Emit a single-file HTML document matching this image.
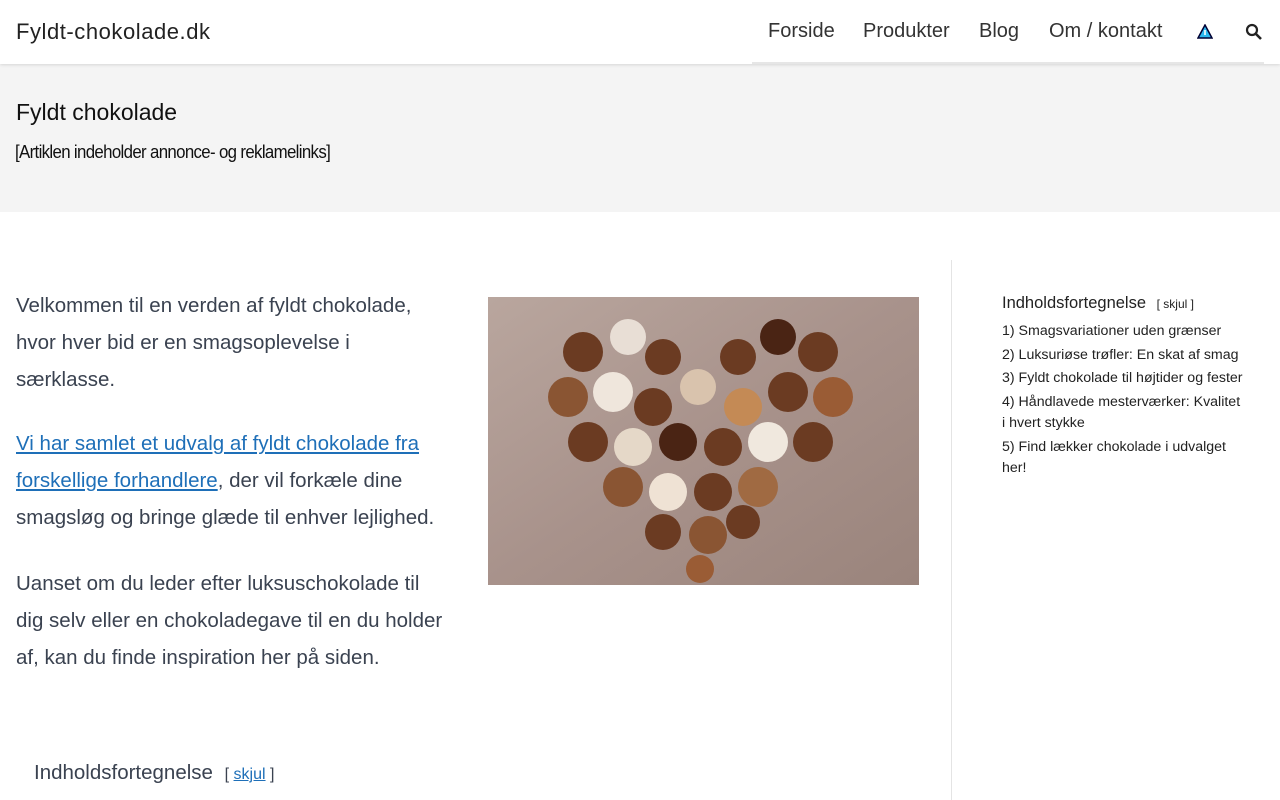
<!DOCTYPE html>
<html><head><meta charset="utf-8"><style>
*{margin:0;padding:0;box-sizing:border-box}
body{width:1280px;height:800px;overflow:hidden;background:#fff;font-family:"Liberation Sans",sans-serif;color:#3a4250}
.hdr{height:64px;position:relative;background:#fff;box-shadow:0 1px 3px rgba(0,0,0,.12);z-index:2}
.logo{position:absolute;left:16px;top:19px;font-size:22px;color:#222;letter-spacing:0.55px}
.nav{position:absolute;left:752px;right:16px;top:0;height:64px;border-bottom:2px solid #e6e6e6}
.nav span{position:absolute;top:20px;font-size:20px;color:#333;letter-spacing:0}
.band{background:#f4f4f4;height:148px;position:relative}
.band h1{position:absolute;left:16px;top:35px;font-size:23px;font-weight:normal;color:#111}
.band p{position:absolute;left:15px;top:78px;font-size:18px;color:#111;letter-spacing:-0.7px;transform:scaleX(.935);transform-origin:left}
.txt{position:absolute;left:16px;width:432px;font-size:20.5px;line-height:37px;color:#3a4250;letter-spacing:0}
a{color:#1e6fb8;text-decoration:underline}
.vline{position:absolute;left:951px;top:260px;width:1px;height:540px;background:#e4e4e4}
.toc{position:absolute;left:1002px;top:294px;width:243px;font-size:14.2px;color:#222}
.toc .t{font-size:16.5px;margin-bottom:8px}
.toc .t small{font-size:12px;margin-left:6px}
.toc div.i{line-height:21.5px;margin-bottom:2px}
</style></head><body>
<div class="hdr"><div class="logo">Fyldt-chokolade.dk</div>
<div class="nav"><span style="left:16px">Forside</span><span style="left:111px">Produkter</span><span style="left:227px">Blog</span><span style="left:297px">Om / kontakt</span>
<svg style="position:absolute;left:445px;top:24px" width="16" height="15" viewBox="0 0 16 15"><path d="M8 1L15 14H1Z" fill="#2bb8f0" stroke="#003" stroke-width="1.5"/><rect x="7.2" y="6" width="1.6" height="5" fill="#fff"/></svg>
<svg style="position:absolute;left:493px;top:23px" width="18" height="18" viewBox="0 0 18 18"><circle cx="7" cy="7" r="5" fill="none" stroke="#222" stroke-width="2.2"/><path d="M10.5 10.5L16 16" stroke="#222" stroke-width="2.6"/></svg>
</div></div>
<div class="band"><h1>Fyldt chokolade</h1><p>[Artiklen indeholder annonce- og reklamelinks]</p></div>
<div class="txt" style="top:287px;width:415px">Velkommen til en verden af fyldt chokolade, hvor hver bid er en smagsoplevelse i særklasse.</div>
<div class="txt" style="top:425px;width:430px"><a>Vi har samlet et udvalg af fyldt chokolade fra forskellige forhandlere</a>, der vil forkæle dine smagsløg og bringe glæde til enhver lejlighed.</div>
<div class="txt" style="top:565px;width:430px">Uanset om du leder efter luksuschokolade til dig selv eller en chokoladegave til en du holder af, kan du finde inspiration her på siden.</div>
<svg style="position:absolute;left:488px;top:297px" width="431" height="288" viewBox="0 0 431 288">
<defs><linearGradient id="w" x1="0" y1="0" x2="1" y2="1"><stop offset="0" stop-color="#b9a69e"/><stop offset=".5" stop-color="#a8928b"/><stop offset="1" stop-color="#9a847c"/></linearGradient></defs>
<rect width="431" height="288" fill="url(#w)"/>
<g fill="#6b3b22">
<circle cx="95" cy="55" r="20"/><circle cx="140" cy="40" r="18" fill="#e8ded5"/><circle cx="175" cy="60" r="18"/><circle cx="210" cy="90" r="18" fill="#d9c3ad"/><circle cx="250" cy="60" r="18"/><circle cx="290" cy="40" r="18" fill="#4a2414"/><circle cx="330" cy="55" r="20"/>
<circle cx="80" cy="100" r="20" fill="#8a5533"/><circle cx="125" cy="95" r="20" fill="#efe6dc"/><circle cx="165" cy="110" r="19"/><circle cx="255" cy="110" r="19" fill="#c48a55"/><circle cx="300" cy="95" r="20"/><circle cx="345" cy="100" r="20" fill="#9a5c35"/>
<circle cx="100" cy="145" r="20"/><circle cx="145" cy="150" r="19" fill="#e5d8c8"/><circle cx="190" cy="145" r="19" fill="#4a2414"/><circle cx="235" cy="150" r="19"/><circle cx="280" cy="145" r="20" fill="#f0e8de"/><circle cx="325" cy="145" r="20"/>
<circle cx="135" cy="190" r="20" fill="#8a5533"/><circle cx="180" cy="195" r="19" fill="#efe2d4"/><circle cx="225" cy="195" r="19"/><circle cx="270" cy="190" r="20" fill="#a06a42"/>
<circle cx="175" cy="235" r="18"/><circle cx="220" cy="238" r="19" fill="#8a5533"/><circle cx="255" cy="225" r="17"/><circle cx="212" cy="272" r="14" fill="#9a5c35"/>
</g></svg>
<div class="vline"></div>
<div class="toc"><div class="t">Indholdsfortegnelse <small>[ skjul ]</small></div>
<div class="i">1) Smagsvariationer uden grænser</div>
<div class="i">2) Luksuriøse trøfler: En skat af smag</div>
<div class="i">3) Fyldt chokolade til højtider og fester</div>
<div class="i">4) Håndlavede mesterværker: Kvalitet i hvert stykke</div>
<div class="i">5) Find lækker chokolade i udvalget her!</div></div>
<div style="position:absolute;left:34px;top:761px;font-size:20.5px;color:#3a4250">Indholdsfortegnelse <span style="font-size:16px;margin-left:6px">[ <a>skjul</a> ]</span></div>
</body></html>
